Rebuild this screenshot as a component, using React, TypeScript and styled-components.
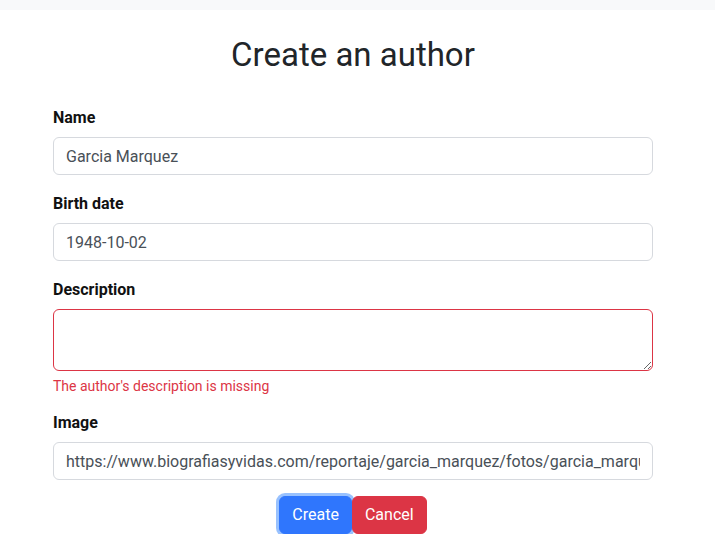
import React from "react";
import styled, { createGlobalStyle } from "styled-components";

const Global = createGlobalStyle`
  html, body { margin: 0; padding: 0; background: #fff; }
  body {
    font-family: "Segoe UI", Roboto, "Noto Sans", sans-serif;
    font-size: 16px;
    line-height: 1.5;
    color: #212529;
  }
  * { box-sizing: border-box; }
`;

const TopBar = styled.div`
  height: 10px;
  background: #f8f9fa;
`;

const Container = styled.main`
  width: 600px;
  margin-left: 53px;
  padding-top: 26px;
  display: flex;
  flex-direction: column;
`;

const Title = styled.h1`
  margin: 0 0 31px;
  font-size: 33px;
  font-weight: 400;
  line-height: 38px;
  text-align: center;
  color: #212529;
`;

const Form = styled.form`
  display: flex;
  flex-direction: column;
`;

const Field = styled.div`
  display: flex;
  flex-direction: column;
  margin-bottom: 16px;
`;

const Label = styled.label`
  font-weight: 700;
  margin-top: 1px;
  margin-bottom: 7px;
  color: #111;
`;

const Input = styled.input`
  display: block;
  width: 100%;
  height: 38px;
  padding: 6px 12px;
  font: inherit;
  color: #495057;
  background: #fff;
  border: 1px solid #d6d9de;
  border-radius: 6px;
  outline: none;
`;

const TextArea = styled.textarea<{ $invalid?: boolean }>`
  display: block;
  width: 100%;
  height: 62px;
  padding: 6px 12px;
  font: inherit;
  color: #495057;
  background: #fff;
  border: 1px solid ${(p) => (p.$invalid ? "#dc3545" : "#dee2e6")};
  border-radius: 6px;
  outline: none;
  resize: vertical;
`;

const Feedback = styled.div`
  margin-top: 5px;
  margin-bottom: -3px;
  font-size: 14px;
  line-height: 21px;
  color: #dc3545;
`;

const Actions = styled.div`
  display: flex;
  justify-content: center;
`;

const Button = styled.button<{ $variant: "primary" | "danger"; $focus?: boolean }>`
  height: 38px;
  padding: 6px 12px;
  font: inherit;
  color: #fff;
  border: 1px solid ${(p) => (p.$variant === "primary" ? "#2f76fd" : "#dc3545")};
  background: ${(p) => (p.$variant === "primary" ? "#2f76fd" : "#dc3545")};
  border-radius: 6px;
  cursor: pointer;
  box-shadow: ${(p) => (p.$focus ? "0 0 0 3px rgba(49,132,253,0.5)" : "none")};
`;

export default function App() {
  return (
    <>
      <Global />
      <TopBar />
      <Container>
        <Title>Create an author</Title>
        <Form onSubmit={(e) => e.preventDefault()}>
          <Field>
            <Label>Name</Label>
            <Input defaultValue="Garcia Marquez" />
          </Field>
          <Field>
            <Label>Birth date</Label>
            <Input defaultValue="1948-10-02" />
          </Field>
          <Field>
            <Label>Description</Label>
            <TextArea $invalid />
            <Feedback>The author's description is missing</Feedback>
          </Field>
          <Field>
            <Label>Image</Label>
            <Input defaultValue="https://www.biografiasyvidas.com/reportaje/garcia_marquez/fotos/garcia_marquez_1.jpg" />
          </Field>
          <Actions>
            <Button $variant="primary" $focus>Create</Button>
            <Button $variant="danger" type="button">Cancel</Button>
          </Actions>
        </Form>
      </Container>
    </>
  );
}
